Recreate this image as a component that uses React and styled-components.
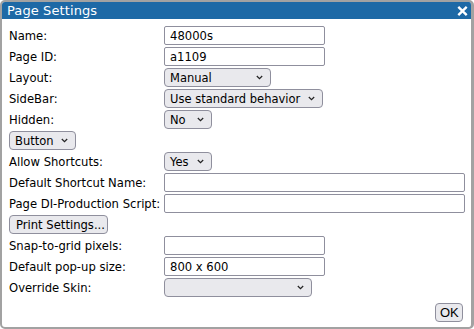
import styled, { createGlobalStyle } from 'styled-components';

const GlobalStyle = createGlobalStyle`
  html, body {
    margin: 0;
    padding: 0;
    background: #ffffff;
  }
  #root {
    width: 474px;
    height: 329px;
  }
`;

const Window = styled.div`
  box-sizing: border-box;
  width: 474px;
  height: 329px;
  border: 2px solid #a2a2a2;
  border-right-width: 3px;
  border-radius: 5px;
  background: #ffffff;
  display: flex;
  flex-direction: column;
  overflow: hidden;
  font-family: "DejaVu Sans", Verdana, sans-serif;
`;

const TitleBar = styled.div`
  height: 17px;
  background: #1d69a6;
  color: #ffffff;
  display: flex;
  align-items: center;
  justify-content: space-between;
  padding: 0 3px 0 5px;
  font-size: 13px;
  letter-spacing: 0.1px;
`;

const CloseButton = styled.span`
  display: flex;
  align-items: center;
  cursor: pointer;
`;

const Body = styled.div`
  flex: 1;
  display: grid;
  grid-template-columns: 155px 1fr;
  grid-auto-rows: 19px;
  row-gap: 2px;
  align-content: start;
  padding: 7px 6px 0 7px;
`;

const Label = styled.label`
  display: flex;
  align-items: center;
  font-size: 11.6px;
  color: #000000;
  white-space: nowrap;
`;

const Cell = styled.div`
  display: flex;
  align-items: center;
  grid-column: ${(p) => (p.$full ? '1 / -1' : 'auto')};
`;

const TextInput = styled.input`
  box-sizing: border-box;
  width: ${(p) => p.$w}px;
  height: 19px;
  border: 1px solid #8f8f9d;
  border-radius: 2px;
  padding: 0 5px;
  font-family: "DejaVu Sans", Verdana, sans-serif;
  font-size: 11.6px;
  color: #000;
  background: #fff;
  outline: none;
`;

const SelectBox = styled.div`
  box-sizing: border-box;
  width: ${(p) => p.$w}px;
  height: 19px;
  border: 1px solid #8f8f9d;
  border-radius: 4px;
  background: #e9e9ed;
  display: flex;
  align-items: center;
  justify-content: space-between;
  padding: 0 7px 0 5px;
  font-family: "DejaVu Sans", Verdana, sans-serif;
  font-size: 11.5px;
  color: #000;
  white-space: nowrap;
`;

const PushButton = styled.button`
  box-sizing: border-box;
  width: ${(p) => p.$w}px;
  height: 19px;
  border: 1px solid #8f8f9d;
  border-radius: 4px;
  background: #e9e9ed;
  padding: 0 ${(p) => (p.$sys ? 4 : 6)}px;
  font-family: ${(p) => (p.$sys ? '"Liberation Sans", Arial, sans-serif' : '"DejaVu Sans", Verdana, sans-serif')};
  font-size: ${(p) => (p.$sys ? 13 : 11.6)}px;
  color: #000;
  text-align: left;
  white-space: nowrap;
`;

const Footer = styled.div`
  display: flex;
  justify-content: flex-end;
  padding: 0 8px 5px 0;
`;

const Chevron = () => (
  <svg width="7" height="5" viewBox="0 0 7 5">
    <path d="M0.8 1 L3.5 3.7 L6.2 1" fill="none" stroke="#222" strokeWidth="1.2" />
  </svg>
);

const Select = ({ w, value }) => (
  <SelectBox $w={w}>
    <span>{value}</span>
    <Chevron />
  </SelectBox>
);

export default function App() {
  return (
    <>
      <GlobalStyle />
      <Window>
        <TitleBar>
          <span>Page Settings</span>
          <CloseButton>
            <svg width="11" height="10" viewBox="0 0 11 10">
              <path d="M1.3 0.9 L9.7 9.1 M9.7 0.9 L1.3 9.1" stroke="#fff" strokeWidth="2.4" />
            </svg>
          </CloseButton>
        </TitleBar>
        <Body>
          <Label>Name:</Label>
          <Cell><TextInput $w={161} defaultValue="48000s" /></Cell>

          <Label>Page ID:</Label>
          <Cell><TextInput $w={161} defaultValue="a1109" /></Cell>

          <Label>Layout:</Label>
          <Cell><Select w={107} value="Manual" /></Cell>

          <Label>SideBar:</Label>
          <Cell><Select w={159} value="Use standard behavior" /></Cell>

          <Label>Hidden:</Label>
          <Cell><Select w={48} value="No" /></Cell>

          <Cell $full><Select w={67} value="Button" /></Cell>

          <Label>Allow Shortcuts:</Label>
          <Cell><Select w={48} value="Yes" /></Cell>

          <Label>Default Shortcut Name:</Label>
          <Cell><TextInput $w={301} /></Cell>

          <Label>Page DI-Production Script:</Label>
          <Cell><TextInput $w={301} /></Cell>

          <Cell $full><PushButton $w={99}>Print Settings...</PushButton></Cell>

          <Label>Snap-to-grid pixels:</Label>
          <Cell><TextInput $w={161} /></Cell>

          <Label>Default pop-up size:</Label>
          <Cell><TextInput $w={161} defaultValue="800 x 600" /></Cell>

          <Label>Override Skin:</Label>
          <Cell><Select w={148} value="" /></Cell>
        </Body>
        <Footer>
          <PushButton $w={28} $sys>OK</PushButton>
        </Footer>
      </Window>
    </>
  );
}
